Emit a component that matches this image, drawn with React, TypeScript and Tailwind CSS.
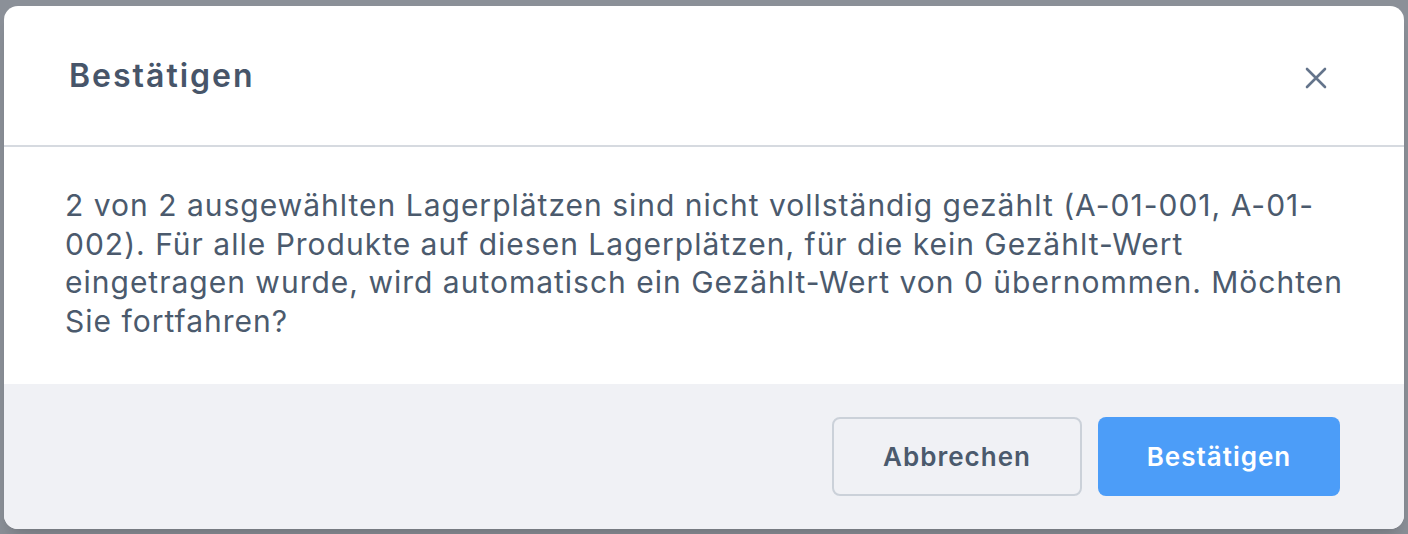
export default function App() {
  return (
    <div className="min-h-screen bg-[#8b9098] px-[4px] pt-[6px] font-['Inter',sans-serif]">
      <div className="w-full overflow-hidden rounded-[14px] bg-white shadow-xl">
        <div className="flex h-[141px] items-center justify-between border-b-2 border-[#d6dae0] pl-[65px] pr-[76px]">
          <h2 className="text-[32px] font-semibold tracking-[2px] text-[#475569]">Bestätigen</h2>
          <button className="mt-[4px] text-[#64748b]">
            <svg width="24" height="24" viewBox="0 0 24 24" fill="none" stroke="currentColor" strokeWidth="2.6" strokeLinecap="round">
              <path d="M3 3l18 18M21 3L3 21" />
            </svg>
          </button>
        </div>
        <div className="pb-[44px] pl-[61px] pr-[54px] pt-[39px]">
          <p className="text-[30px] leading-[38.5px] tracking-[1px] text-[#4b5a6d]">
            2 von 2 ausgewählten Lagerplätzen sind nicht vollständig gezählt (A-01-001, A-01-002). Für alle Produkte auf diesen Lagerplätzen, für die kein Gezählt-Wert eingetragen wurde, wird automatisch ein Gezählt-Wert von 0 übernommen. Möchten Sie fortfahren?
          </p>
        </div>
        <div className="flex h-[145px] items-start justify-end gap-[16px] bg-[#f0f1f5] pr-[64px] pt-[33px]">
          <button className="h-[79px] w-[250px] rounded-[8px] border-2 border-[#cbd1d9] text-[26px] font-semibold tracking-[1px] text-[#4b5a6d]">
            Abbrechen
          </button>
          <button className="h-[79px] w-[242px] rounded-[8px] bg-[#4c9df8] text-[26px] font-semibold tracking-[1px] text-white">
            Bestätigen
          </button>
        </div>
      </div>
    </div>
  )
}
